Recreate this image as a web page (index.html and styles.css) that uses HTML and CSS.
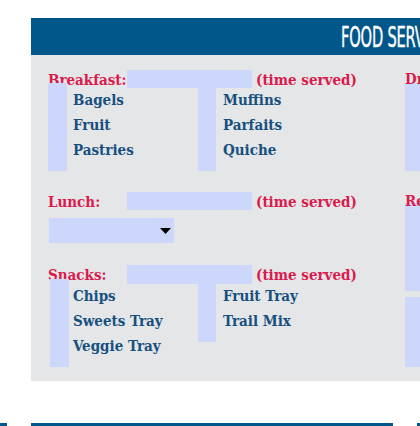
FILE: index.html
```html
<!DOCTYPE html>
<html lang="en">
<head>
<meta charset="utf-8">
<title>Food Service</title>
<link rel="stylesheet" href="styles.css">
</head>
<body>
<div class="page">
  <section class="card">
    <header class="card-head"><h1 class="card-title">FOOD SERVICE</h1></header>
    <div class="card-body">
      <div class="col-main">
        <div class="meal">
          <div class="meal-row">
            <span class="label">Breakfast:</span><span class="field"></span><span class="note">(time served)</span>
          </div>
          <div class="choices">
            <div class="choice-col">
              <span class="strip"></span>
              <ul class="items"><li>Bagels</li><li>Fruit</li><li>Pastries</li></ul>
            </div>
            <div class="choice-col choice-col--second">
              <span class="strip"></span>
              <ul class="items"><li>Muffins</li><li>Parfaits</li><li>Quiche</li></ul>
            </div>
          </div>
        </div>

        <div class="meal meal--lunch">
          <div class="meal-row">
            <span class="label">Lunch:</span><span class="field"></span><span class="note">(time served)</span>
          </div>
          <div class="dropdown">
            <svg class="caret" width="11" height="6" viewBox="0 0 11 6"><polygon points="0,0 11,0 5.5,6" fill="#000"/></svg>
          </div>
        </div>

        <div class="meal meal--snacks">
          <div class="meal-row meal-row--tall">
            <span class="label">Snacks:</span><span class="field"></span><span class="note">(time served)</span>
          </div>
          <div class="choices">
            <div class="choice-col choice-col--shift">
              <span class="strip"></span>
              <ul class="items"><li>Chips</li><li>Sweets Tray</li><li>Veggie Tray</li></ul>
            </div>
            <div class="choice-col choice-col--second">
              <span class="strip"></span>
              <ul class="items"><li>Fruit Tray</li><li>Trail Mix</li></ul>
            </div>
          </div>
        </div>
      </div>

      <div class="col-side">
        <div class="side-row"><span class="label">Drinks:</span></div>
        <div class="side-box side-box--first"></div>
        <div class="side-row side-row--gap"><span class="label">Refreshments:</span></div>
        <div class="side-box side-box--second"></div>
        <div class="side-box side-box--third"></div>
      </div>
    </div>
  </section>

  <div class="next-row">
    <span class="bar bar--a"></span>
    <span class="bar bar--b"></span>
    <span class="bar bar--c"></span>
  </div>
</div>
</body>
</html>
```

FILE: styles.css
```css
html, body {
  margin: 0;
  padding: 0;
  background: #ffffff;
}

body {
  width: 420px;
  height: 426px;
  overflow: hidden;
  font-family: "DejaVu Serif Condensed", "DejaVu Serif", serif;
  font-weight: bold;
  font-size: 15px;
}

.page {
  padding-top: 18px;
  width: 420px;
  overflow: hidden;
}

.card {
  margin-left: 31px;
  width: 560px;
}

.card-head {
  height: 37px;
  background: #02578a;
  overflow: hidden;
  white-space: nowrap;
}

.card-title {
  margin: 0;
  padding-left: 310px;
  color: #ffffff;
  font-family: "Liberation Sans Narrow", "DejaVu Sans Condensed", "Liberation Sans", sans-serif;
  font-weight: normal;
  font-size: 28px;
  line-height: 40px;
  letter-spacing: -0.3px;
  -webkit-text-stroke: 0.4px #ffffff;
  display: inline-block;
  transform: scaleX(0.58);
  transform-origin: 310px 0;
}

.card-body {
  display: flex;
  background: #e5e6e8;
  padding: 15px 0 14px 17px;
}

.col-main {
  width: 357px;
  flex: none;
}

.col-side {
  flex: 1;
}

.label {
  color: #d91a4d;
}

.meal-row {
  display: flex;
  align-items: center;
  height: 18px;
}

.meal-row--tall {
  height: 19px;
}

.meal-row .label {
  width: 79px;
  flex: none;
  padding-top: 1px;
}

.field {
  width: 125px;
  align-self: stretch;
  background: #cdd7fb;
  flex: none;
}

.note {
  margin-left: 4px;
  padding-top: 1px;
  color: #d91a4d;
}

.choices {
  display: flex;
  align-items: flex-start;
  margin-top: -5px;
}

.choice-col {
  display: flex;
  width: 150px;
}

.strip {
  width: 19px;
  flex: none;
  background: #cdd7fb;
}

.choice-col--second .strip {
  width: 18px;
  margin-top: 5px;
}

.choice-col--shift .strip {
  margin-left: 2px;
}

.items {
  list-style: none;
  margin: 0 0 0 6px;
  padding: 5px 0 8px;
  line-height: 25px;
  color: #17507f;
}

.choice-col--second .items {
  margin-left: 7px;
}

.choice-col--shift .items {
  margin-left: 4px;
}

.meal--lunch {
  margin-top: 21px;
}

.dropdown {
  margin-top: 8px;
  margin-left: 1px;
  width: 125px;
  height: 25px;
  background: #cdd7fb;
  display: flex;
  align-items: center;
  justify-content: flex-end;
  padding-right: 3px;
  box-sizing: border-box;
}

.meal--snacks {
  margin-top: 22px;
}

.side-row {
  height: 18px;
  display: flex;
  align-items: center;
  white-space: nowrap;
}

.side-row--gap {
  margin-top: 21px;
}

.side-box {
  background: #cdd7fb;
}

.side-box--first {
  margin-top: -5px;
  height: 88px;
}

.side-box--second {
  margin-top: -7px;
  height: 88px;
}

.side-box--third {
  margin-top: 6px;
  height: 70px;
}

.next-row {
  display: flex;
  gap: 24px;
  margin-top: 42px;
}

.bar {
  height: 8px;
  background: #02578a;
  flex: none;
}

.bar--a { width: 7px; }
.bar--b { width: 362px; }
.bar--c { width: 100px; }
```
